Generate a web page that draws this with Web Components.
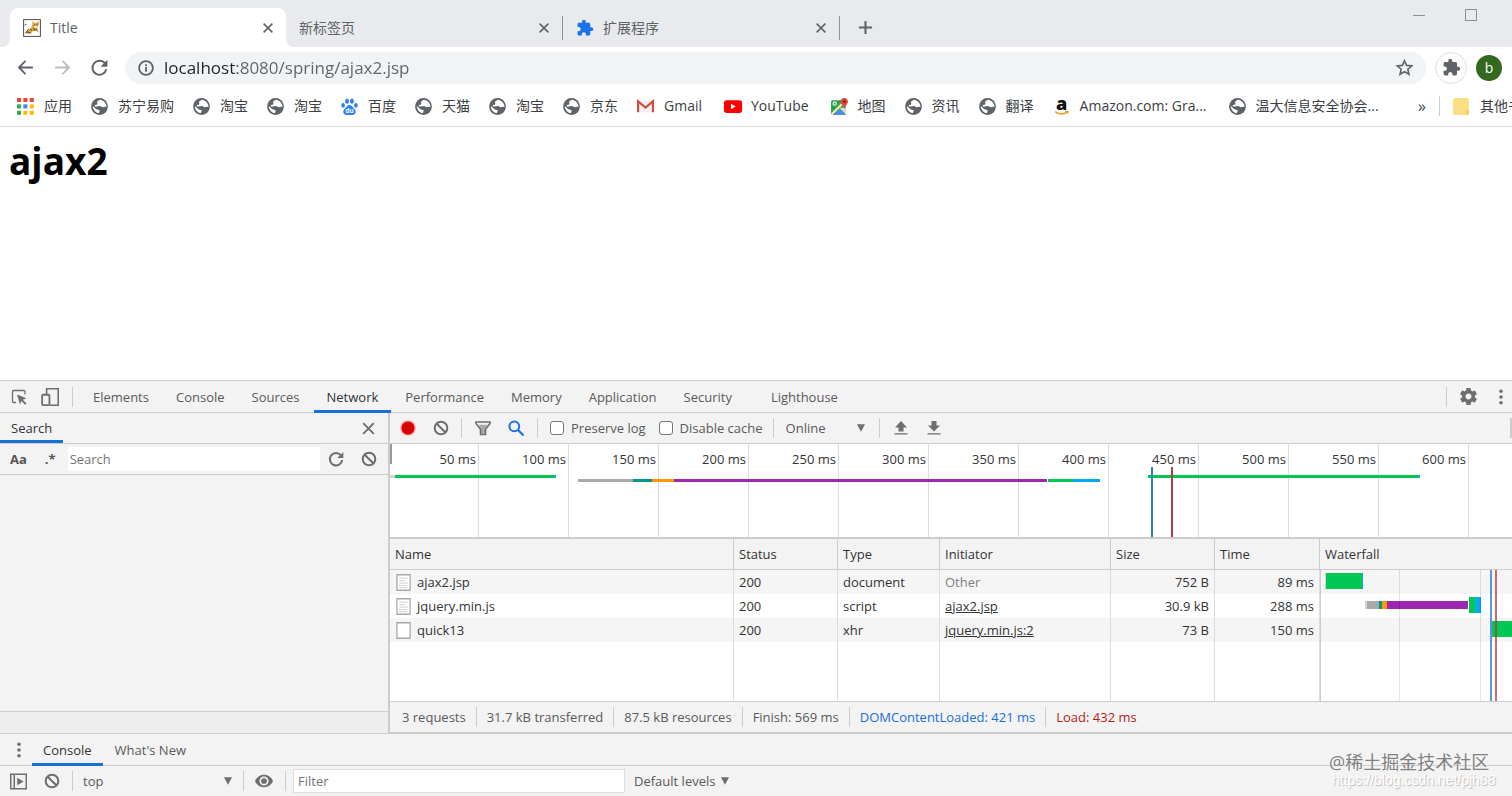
<!DOCTYPE html>
<html lang="zh-CN">
<head>
<meta charset="UTF-8">
<meta name="viewport" content="width=device-width, initial-scale=1.0">
<title>Title</title>
<style>
  * { box-sizing: border-box; }
  html, body { height: 100%; margin: 0; }
  body {
    font-family: "Open Sans", "Noto Sans CJK SC", sans-serif;
    overflow: hidden;
    background: #fff;
  }
</style>
</head>
<body>
<browser-window></browser-window>

<script>
const BASE = `
  * { box-sizing: border-box; }
  button, input, select { font: inherit; color: inherit; border: 0; background: none; padding: 0; margin: 0; outline: 0; }
  button { display: inline-flex; align-items: center; justify-content: center; flex: none; }
  a { color: inherit; }
`;

const ICONS = {
  close: '<path d="M3 3l10 10M13 3L3 13" fill="none" stroke="currentColor" stroke-width="1.8"/>',
  plus: '<path d="M8 1v14M1 8h14" fill="none" stroke="currentColor" stroke-width="2.200"/>',
  back: '<path d="M15 8H2M8 1.7L1.8 8 8 14.3" fill="none" stroke="currentColor" stroke-width="1.7"/>',
  forward: '<path d="M1 8h13M8 1.7L14.2 8 8 14.3" fill="none" stroke="currentColor" stroke-width="1.7"/>',
  reload: '<path d="M13.2 4.2A6.6 6.6 0 1 0 14.4 9.6" fill="none" stroke="currentColor" stroke-width="1.8"/><path d="M15.4 .8v6.4H9z" fill="currentColor"/>',
  info: '<circle cx="8" cy="8" r="6.9" fill="none" stroke="currentColor" stroke-width="1.8"/><path d="M8 7v4.8M8 4.2v1.8" stroke="currentColor" stroke-width="1.8"/>',
  star: '<path d="M8 1.6l1.9 4.4 4.9.4-3.7 3.2 1.1 4.8L8 11.9l-4.2 2.5 1.1-4.8L1.2 6.4 6.1 6z" fill="none" stroke="currentColor" stroke-width="1.5"/>',
  puzzle: '<path transform="scale(.6667)" d="M20.5 11H19V7c0-1.100-.9-2-2-2h-4V3.500C13 2.120 11.880 1 10.500 1S8 2.120 8 3.500V5H4c-1.100 0-1.990.9-1.990 2v3.800H3.500c1.490 0 2.700 1.210 2.700 2.700s-1.210 2.700-2.700 2.700H2V20c0 1.100.9 2 2 2h3.800v-1.500c0-1.490 1.210-2.700 2.700-2.700 1.490 0 2.700 1.210 2.700 2.700V22H17c1.100 0 2-.9 2-2v-4h1.500c1.380 0 2.500-1.120 2.500-2.500S21.880 11 20.500 11z" fill="currentColor"/>',
  minimize: '<path d="M2 8.500h12" stroke="currentColor" stroke-width="1"/>',
  maximize: '<rect x="2.500" y="2.500" width="11" height="11" fill="none" stroke="currentColor"/>',
  cat: `<rect x=".5" y=".5" width="15" height="15" fill="#fff" stroke="#6b5a66"/>
    <path d="M2 13l2-3.500 3-1 1.500-4L8 2l2.400 1.600 2.100-.4L14.500 2l-.6 3.500-1.400 2.300 1.600 4.200-2.800-1.500-2.800.3-3 2.300z" fill="#d9a441"/>
    <path d="M2 12.500l3-3.500M6.500 8.500l1.500 2M9.500 8l1 2.500M11.500 8.500l.8 1.500M10 5.200h.8M12 5.200h.8M1.500 5.500l2-1M3.500 11.500l4 1" stroke="#3a2a1a" stroke-width=".7" fill="none"/>
    <path d="M10 6.500l1.500 1 1.300-1" stroke="#fff" fill="none"/>`,
  apps: [['#ea4335', '#ea4335', '#ea4335'], ['#34a853', '#4285f4', '#fbbc05'], ['#34a853', '#fbbc05', '#fbbc05']]
    .map((row, y) => row.map((c, x) => `<rect x="${x * 6}" y="${y * 6}" width="3.800" height="3.800" fill="${c}"/>`).join('')).join(''),
  globe: `<circle cx="8" cy="8" r="7.900" fill="#5f6368"/>
    <path d="M9 1.800c-.6.800-1.800.7-2.500 1.300-.6.700.3 1.700-.4 2.400-.8.600-1.900.1-2.400.9-.3.800.5 1.200 1.400 1.200l3.700.1c.9.100 1 1.300 1.900 1.500 1.200.2 2.700-.6 3.700.4.500-3.700-1.700-7-5.400-7.800z" fill="#fff" transform="rotate(-8 8 8)"/>
    <path d="M1.700 7.500l3.400 3c.9.600 2.300.2 2.900 1 .5.900-.5 1.700-.4 2.700-3.300-.2-6-3.300-5.900-6.700z" fill="#fff"/>`,
  baidu: `<g fill="#2f80f0"><ellipse cx="5.700" cy="3" rx="1.800" ry="2.600"/><ellipse cx="10.300" cy="3" rx="1.800" ry="2.600"/><ellipse cx="2" cy="7" rx="1.700" ry="2.200"/><ellipse cx="14" cy="7" rx="1.700" ry="2.200"/>
    <path d="M8 6.500c2 0 2.900 2 4.200 3.300 1.500 1.400 2.100 2.600 1.500 4.300-.6 1.700-2.200 1.900-5.700 1.900s-5.100-.2-5.700-1.900c-.6-1.700 0-2.900 1.500-4.300C5.100 8.500 6 6.500 8 6.500z"/></g>
    <text x="8" y="14.300" font-size="6" font-weight="700" text-anchor="middle" fill="#fff">du</text>`,
  gmail: '<path d="M0 2.500h16v11H0z" fill="#f1f1f1"/><path d="M1 13.500V3.200l7 5.900 7-5.900v10.300" fill="none" stroke="#d54b3d" stroke-width="2"/>',
  youtube: '<rect y="2" width="17" height="12" rx="2.500" fill="#f00"/><path d="M6.500 5.300l4.600 2.700-4.600 2.700z" fill="#fff"/>',
  maps: `<rect y="2" width="14" height="14" rx="1.500" fill="#34a853"/><path d="M14 9v6.500L8 9.500z" fill="#ddd"/><path d="M2.500 16L8 10.500l5.500 5.500z" fill="#4c8bf5"/>
    <path d="M.5 15.500L13.500 2.500" stroke="#f7e9b5" stroke-width="2"/><path d="M.6 10.800L9 2.300" stroke="#1f8f46"/><circle cx="3.500" cy="5.300" r="1.500" fill="none" stroke="#fff"/>
    <path d="M12.500 0c2.100 0 3.500 1.600 3.500 3.400 0 2.600-2.700 3.600-3.500 7.100C11.700 7 9 6 9 3.400 9 1.600 10.400 0 12.500 0z" fill="#e24a3b"/><circle cx="12.500" cy="3.500" r="1.300" fill="#8c2219"/>`,
  amazon: `<text x="8" y="11" font-size="17" font-weight="800" text-anchor="middle" fill="#111">a</text>
    <path d="M2 12.800c3.500 2.700 8 2.700 11.300.5M11.500 12.600l2.500.2-.6 2" fill="none" stroke="#f19a1a" stroke-width="1.300"/>`,
  folder: '<path d="M2 0h11a2 2 0 0 1 2 2v12a2 2 0 0 1-2 2H2a2 2 0 0 1-2-2V2a2 2 0 0 1 2-2z" fill="#fbdf83"/><path d="M12 16v-4.500h3V14a2 2 0 0 1-2 2z" fill="#f1cc60"/>',
  inspect: '<path d="M14 5.500V2.600a1.100 1.100 0 0 0-1.100-1.100H2.600a1.100 1.100 0 0 0-1.100 1.100v9.800a1.100 1.100 0 0 0 1.100 1.100H5" fill="none" stroke="currentColor" stroke-width="1.300"/><path d="M6 5.500l9.500 3.800-3.700 1.500 3.700 3.700-1.300 1.300-3.700-3.700L9 15.500z" fill="currentColor"/>',
  device: '<path d="M5 6V.7h10.300v14.600H8" fill="none" stroke="currentColor" stroke-width="1.400"/><rect x="1" y="6" width="6.500" height="9.300" rx=".8" fill="none" stroke="currentColor" stroke-width="1.600"/>',
  gear: '<path transform="translate(-1.600 -1.600) scale(.8)" fill="currentColor" fill-rule="evenodd" d="M19.430 12.980c.04-.32.07-.64.07-.98s-.03-.66-.07-.98l2.110-1.650c.19-.15.24-.42.12-.64l-2-3.460c-.12-.22-.39-.3-.61-.22l-2.490 1c-.52-.4-1.080-.73-1.690-.98l-.38-2.650C14.460 2.180 14.250 2 14 2h-4c-.25 0-.46.180-.49.420l-.38 2.650c-.61.250-1.170.590-1.690.98l-2.490-1c-.23-.09-.49 0-.61.220l-2 3.460c-.13.220-.07.490.12.640l2.110 1.650c-.04.320-.07.650-.07.980s.03.660.07.980l-2.110 1.650c-.19.150-.24.420-.12.640l2 3.460c.12.220.39.300.61.220l2.490-1c.52.400 1.080.730 1.690.980l.38 2.650c.03.240.24.420.49.420h4c.25 0 .46-.18.49-.42l.38-2.650c.61-.25 1.170-.59 1.690-.98l2.490 1c.23.090.49 0 .61-.22l2-3.460c.12-.22.07-.49-.12-.64l-2.110-1.650zM12 15.500c-1.930 0-3.500-1.570-3.500-3.500s1.570-3.500 3.500-3.500 3.500 1.570 3.500 3.500-1.570 3.500-3.500 3.500z"/>',
  dots: '<g fill="currentColor"><circle cx="8" cy="2.200" r="1.800"/><circle cx="8" cy="8" r="1.800"/><circle cx="8" cy="13.800" r="1.800"/></g>',
  record: '<circle cx="8" cy="8" r="8" fill="#f8b9b5"/><circle cx="8" cy="8" r="6.600" fill="#d80000"/>',
  block: '<circle cx="8" cy="8" r="6.300" fill="none" stroke="currentColor" stroke-width="2"/><path d="M3.700 3.700l8.600 8.600" stroke="currentColor" stroke-width="2"/>',
  filter: '<path d="M1 2h14v1.500l-4.500 5.700v5.300h-5V9.200L1 3.500z" fill="none" stroke="currentColor" stroke-width="1.600"/><path d="M3.500 4.800h9L10 8.800v5H6v-5z" fill="currentColor" opacity=".55"/>',
  search: '<circle cx="6.300" cy="6.300" r="4.900" fill="none" stroke="#1a73e8" stroke-width="2"/><path d="M9.800 9.800l5.700 5.700" stroke="#1a73e8" stroke-width="2.200"/>',
  upload: '<path d="M8 1l6 6.500h-3.500v4h-5v-4H2zM1.500 13.200h13v1.400h-13z" fill="currentColor"/>',
  download: '<path d="M8 11.500L2 5.500h3.500V1h5v4.500H14zM1.500 13.200h13v1.400h-13z" fill="currentColor"/>',
  refresh: '<path d="M13 4.500A6.200 6.200 0 1 0 14.200 9" fill="none" stroke="currentColor" stroke-width="2"/><path d="M15.300 1v6H9.300z" fill="currentColor"/>',
  sidebar: '<path d="M.7 1.200h14.600v13.600H.7zM4 1v14" fill="none" stroke="currentColor" stroke-width="1.400"/><path d="M6.800 4.500l6 3.500-6 3.500z" fill="currentColor"/>',
  eye: '<path d="M8 2.500C4.400 2.500 1.300 4.800 0 8c1.300 3.200 4.400 5.500 8 5.500s6.700-2.300 8-5.500c-1.300-3.200-4.400-5.500-8-5.500z" fill="currentColor"/><circle cx="8" cy="8" r="3.300" fill="none" stroke="#f3f3f3" stroke-width="1.500"/>',
  caret: '<path d="M1.500 2h13L8 14z" fill="currentColor"/>',
  doc: '<path d="M1.800.700h12.400v14.600H1.800z" fill="#fff" stroke="#a8a8a8" stroke-width="1.200"/><path d="M4 4h8M4 6.300h6M4 8.600h8M4 10.900h7M4 12.900h8" stroke="#cfcfcf" stroke-width=".9"/>',
  blank: '<path d="M1.800.700h12.400v14.600H1.800z" fill="#fff" stroke="#a8a8a8" stroke-width="1.200"/>',
};

function define(name, render) {
  customElements.define(name, class extends HTMLElement {
    connectedCallback() {
      if (this.shadowRoot) return;
      this.attachShadow({ mode: 'open' });
      this.shadowRoot.innerHTML = `<style>${BASE}</style>` + render(this);
    }
  });
}

// <ui-icon name="..." size="16">
define('ui-icon', (el) => {
  const size = el.getAttribute('size') || 16;
  return `
    <style>
      :host { display: inline-flex; flex: none; width: ${size}px; height: ${size}px; }
      svg { width: 100%; height: 100%; overflow: visible; }
    </style>
    <svg viewBox="0 0 16 16" aria-hidden="true">${ICONS[el.getAttribute('name')]}</svg>`;
});

define('tool-separator', () => `
  <style>
    :host { display: block; flex: none; width: 1px; height: 20px; background: #ccc; }
  </style>`);

// Segments are "colour:width" pairs, drawn left to right; "none" leaves a gap.
define('timing-bar', (el) => {
  const colors = {
    none: 'transparent', edge: '#d5d5d5', wait: '#a9a9a9', dns: '#009688', connect: '#ff9800',
    ssl: '#9c27b0', ttfb: '#00c853', receive: '#03a9f4',
  };
  const parts = el.getAttribute('segments').split(' ').map((s) => {
    const [kind, width] = s.split(':');
    return `<i class="${kind}" style="width:${width}px;background:${colors[kind]}"></i>`;
  });
  return `
    <style>
      :host { display: flex; align-items: center; height: var(--bar-height, 16px); overflow: hidden; }
      i { flex: none; height: 100%; }
      :host([thin]) .edge, :host([thin]) .wait, :host([thin]) .dns,
      :host([thin]) .connect, :host([thin]) .ssl { height: 50%; }
    </style>
    ${parts.join('')}`;
});

define('browser-tab', (el) => `
  <style>
    :host {
      display: flex; align-items: center; flex: 0 1 276px; height: 39px; min-width: 0;
      padding: 0 10px 0 13px; color: #5f6368; font-size: 14px;
    }
    :host([active]) { position: relative; background: #fff; border-radius: 8px 8px 0 0; }
    :host([active])::before, :host([active])::after {
      content: ""; position: absolute; bottom: 0; width: 8px; height: 8px;
    }
    :host([active])::before { right: 100%; background: radial-gradient(circle at 0 0, transparent 8px, #fff 8px); }
    :host([active])::after { left: 100%; background: radial-gradient(circle at 100% 0, transparent 8px, #fff 8px); }
    .label { flex: 1; display: flex; align-items: center; justify-content: flex-start; gap: 9px; min-width: 0; white-space: nowrap; line-height: 20px; }
    .close { width: 16px; height: 16px; color: #5f6368; }
    ui-icon[name=puzzle] { color: #1a73e8; }
  </style>
  <button class="label">${el.getAttribute('icon') ? `<ui-icon name="${el.getAttribute('icon')}" size="18"></ui-icon>` : ''}<slot></slot></button>
  <button class="close" aria-label="Close tab"><ui-icon name="close" size="14"></ui-icon></button>`);

define('tab-strip', () => `
  <style>
    :host { display: flex; align-items: flex-end; height: 47px; padding-left: 10px; background: #e8eaed; color: #5f6368; }
    tool-separator { align-self: center; height: 24px; margin-top: 8px; background: #8f9296; }
    .new { width: 28px; height: 39px; margin-left: 11px; }
    .window { margin-left: auto; align-self: flex-start; display: flex; gap: 36px; padding: 7px 33px 0 0; color: #8d8f92; }
  </style>
  <browser-tab active icon="cat">Title</browser-tab>
  <browser-tab>新标签页</browser-tab>
  <tool-separator></tool-separator>
  <browser-tab icon="puzzle">扩展程序</browser-tab>
  <tool-separator></tool-separator>
  <button class="new" aria-label="New tab"><ui-icon name="plus" size="15"></ui-icon></button>
  <div class="window">
    <button aria-label="Minimize"><ui-icon name="minimize"></ui-icon></button>
    <button aria-label="Maximize"><ui-icon name="maximize"></ui-icon></button>
  </div>`);

define('address-bar', () => `
  <style>
    :host { display: flex; align-items: center; height: 41px; padding: 0 10px 0 17px; color: #5f6368; }
    nav { display: flex; gap: 20px; margin-right: 17px; }
    .forward { color: #babcbe; }
    .omnibox {
      flex: 1; display: flex; align-items: center; height: 32px; padding: 0 13px;
      border-radius: 16px; background: #f1f3f4; gap: 10px;
    }
    input {
      flex: 1; min-width: 0; font-size: 17px; line-height: 24px;
      background: linear-gradient(to right, #202124 73px, #5f6368 73px);
      -webkit-background-clip: text; background-clip: text; -webkit-text-fill-color: transparent;
    }
    .ext { width: 32px; height: 32px; margin-left: 9px; border: 1px solid #dcdfe3; border-radius: 50%; }
    .avatar { width: 26px; height: 26px; margin-left: 9px; border-radius: 50%; background: #33691e; color: #fff; font-size: 14px; line-height: 20px; }
  </style>
  <nav>
    <button aria-label="Back"><ui-icon name="back" size="17"></ui-icon></button>
    <button class="forward" aria-label="Forward"><ui-icon name="forward" size="17"></ui-icon></button>
    <button aria-label="Reload"><ui-icon name="reload" size="17"></ui-icon></button>
  </nav>
  <div class="omnibox">
    <ui-icon name="info"></ui-icon>
    <input type="text" aria-label="Address" value="localhost:8080/spring/ajax2.jsp">
    <button aria-label="Bookmark this page"><ui-icon name="star" size="17"></ui-icon></button>
  </div>
  <button class="ext" aria-label="Extensions"><ui-icon name="puzzle" size="19"></ui-icon></button>
  <button class="avatar">b</button>`);

define('bookmark-link', (el) => `
  <style>
    :host { display: block; flex: none; }
    :host(:lang(en)) { padding-right: 3px; }
    a { display: flex; align-items: center; gap: 10px; color: #3c4043; font-size: 14px; line-height: 20px; white-space: nowrap; text-decoration: none; }
  </style>
  <a href="#"><ui-icon name="${el.getAttribute('icon') || 'globe'}" size="17"></ui-icon><slot></slot></a>`);

define('bookmark-bar', () => `
  <style>
    :host {
      display: flex; align-items: center; gap: 19px; height: 39px; padding: 0 0 2px 17px;
      border-bottom: 1px solid #dadce0; overflow: hidden; color: #3c4043;
    }
    .more { margin-left: auto; font-size: 16px; line-height: 20px; }
    .other { display: flex; align-items: center; flex: none; gap: 13px; width: 73px; margin-left: -6px; }
  </style>
  <bookmark-link icon="apps">应用</bookmark-link>
  <bookmark-link>苏宁易购</bookmark-link>
  <bookmark-link>淘宝</bookmark-link>
  <bookmark-link>淘宝</bookmark-link>
  <bookmark-link icon="baidu">百度</bookmark-link>
  <bookmark-link>天猫</bookmark-link>
  <bookmark-link>淘宝</bookmark-link>
  <bookmark-link>京东</bookmark-link>
  <bookmark-link lang="en" icon="gmail">Gmail</bookmark-link>
  <bookmark-link lang="en" icon="youtube">YouTube</bookmark-link>
  <bookmark-link icon="maps">地图</bookmark-link>
  <bookmark-link>资讯</bookmark-link>
  <bookmark-link>翻译</bookmark-link>
  <bookmark-link lang="en" icon="amazon">Amazon.com: Gra...</bookmark-link>
  <bookmark-link>温大信息安全协会...</bookmark-link>
  <button class="more" aria-label="More bookmarks">»</button>
  <div class="other">
    <tool-separator></tool-separator>
    <bookmark-link icon="folder">其他书签</bookmark-link>
  </div>`);

define('page-view', () => `
  <style>
    :host { display: block; flex: 1; min-height: 0; padding: 9px; overflow: hidden; }
    h1 { margin: 0; font-size: 37px; line-height: 50px; font-weight: 700; color: #000; }
  </style>
  <h1><slot></slot></h1>`);

define('panel-tab', () => `
  <style>
    :host { display: flex; flex: none; }
    button { height: 100%; padding: 2px var(--tab-pad, 11px) 0; border-bottom: 3px solid transparent; white-space: nowrap; line-height: 20px; color: #5a5a5a; }
    :host([active]) button { border-color: #1a6fd6; color: #333; }
  </style>
  <button><slot></slot></button>`);

define('devtools-tabs', () => `
  <style>
    :host { display: flex; align-items: center; height: 33px; padding: 0 3px 0 11px; border-top: 1px solid #ccc; border-bottom: 1px solid #ccc; color: #6e6e6e; }
    .tabs { display: flex; align-self: stretch; margin: 0 auto -1px 7px; gap: 1px; --tab-pad: 13px; }
    .last { margin-left: 12px; }
    tool-separator { margin-left: 13px; }
    button + button { margin-left: 14px; }
    .gear { margin-left: 13px; }
    .gear + button { margin-left: 16px; }
  </style>
  <button aria-label="Inspect element"><ui-icon name="inspect"></ui-icon></button>
  <button aria-label="Toggle device toolbar"><ui-icon name="device" size="18"></ui-icon></button>
  <tool-separator></tool-separator>
  <div class="tabs">
    <panel-tab>Elements</panel-tab>
    <panel-tab>Console</panel-tab>
    <panel-tab>Sources</panel-tab>
    <panel-tab active>Network</panel-tab>
    <panel-tab>Performance</panel-tab>
    <panel-tab>Memory</panel-tab>
    <panel-tab>Application</panel-tab>
    <panel-tab>Security</panel-tab>
    <panel-tab class="last">Lighthouse</panel-tab>
  </div>
  <tool-separator></tool-separator>
  <button class="gear" aria-label="Settings"><ui-icon name="gear" size="17"></ui-icon></button>
  <button aria-label="More options"><ui-icon name="dots"></ui-icon></button>`);

define('search-pane', () => `
  <style>
    :host { display: flex; flex-direction: column; background: #f3f3f3; color: #6e6e6e; }
    header, .bar { display: flex; align-items: center; border-bottom: 1px solid #ccc; }
    header { height: 31px; justify-content: space-between; padding-right: 11px; }
    header panel-tab { align-self: stretch; }
    .bar { height: 31px; padding: 0 11px 0 10px; }
    .bar b { color: #555; line-height: 20px; }
    .regex { margin: 0 12px 0 18px; }
    input { flex: 1; min-width: 0; height: 24px; padding: 0 2px; background: #fff; color: #555; margin-right: 8px; }
    input::placeholder { color: #757575; }
    .clear { margin-left: 17px; }
    .results { flex: 1; }
    footer { height: 22px; border-top: 1px solid #ccc; background: #eee; }
  </style>
  <header>
    <panel-tab active>Search</panel-tab>
    <button aria-label="Close search"><ui-icon name="close" size="17"></ui-icon></button>
  </header>
  <div class="bar">
    <button aria-label="Match case"><b>Aa</b></button>
    <button class="regex" aria-label="Use regular expression"><b>.*</b></button>
    <input type="text" placeholder="Search" aria-label="Search">
    <button aria-label="Refresh"><ui-icon name="refresh"></ui-icon></button>
    <button class="clear" aria-label="Clear"><ui-icon name="block"></ui-icon></button>
  </div>
  <div class="results"></div>
  <footer></footer>`);

define('dev-select', (el) => `
  <style>
    :host { display: inline-grid; align-items: center; flex: none; }
    select, ui-icon { grid-area: 1 / 1; }
    select { appearance: none; width: 100%; line-height: 20px; color: #5a5a5a; }
    ui-icon { justify-self: end; pointer-events: none; }
  </style>
  <select aria-label="${el.getAttribute('label')}"><option>${el.getAttribute('value')}</option></select>
  <ui-icon name="caret" size="10"></ui-icon>`);

define('check-option', () => `
  <style>
    :host { display: inline-flex; flex: none; }
    label { display: flex; align-items: center; gap: 7px; line-height: 20px; color: #5a5a5a; white-space: nowrap; }
    input { appearance: none; width: 14px; height: 14px; border: 1px solid #767676; border-radius: 3px; background: #fff; }
  </style>
  <label><input type="checkbox"><slot></slot></label>`);

define('network-toolbar', () => `
  <style>
    :host { display: flex; align-items: center; height: 31px; padding-left: 10px; border-bottom: 1px solid #ccc; color: #6e6e6e; overflow: hidden; }
    button { width: 16px; margin-right: 17px; }
    .clear { margin-right: 12px; }
    tool-separator + button { margin-left: 13px; }
    check-option { margin-right: 13px; }
    .find { margin-right: 13px; }
    .options { margin-right: 12px; }
    .gap { margin-right: 10px; }
    dev-select { width: 80px; margin: 0 13px 0 12px; }
    .end { margin-left: auto; width: 2px; }
  </style>
  <button aria-label="Record"><ui-icon name="record"></ui-icon></button>
  <button class="clear" aria-label="Clear"><ui-icon name="block"></ui-icon></button>
  <tool-separator></tool-separator>
  <button aria-label="Filter"><ui-icon name="filter"></ui-icon></button>
  <button class="find" aria-label="Search"><ui-icon name="search"></ui-icon></button>
  <tool-separator class="options"></tool-separator>
  <check-option>Preserve log</check-option>
  <check-option class="gap">Disable cache</check-option>
  <tool-separator></tool-separator>
  <dev-select label="Throttling" value="Online"></dev-select>
  <tool-separator></tool-separator>
  <button aria-label="Import HAR"><ui-icon name="upload"></ui-icon></button>
  <button aria-label="Export HAR"><ui-icon name="download"></ui-icon></button>
  <tool-separator class="end"></tool-separator>`);

define('network-overview', () => {
  const cells = [];
  for (let t = 50; t <= 650; t += 50) cells.push(`<span>${t} ms</span>`);
  return `
  <style>
    :host { display: block; position: relative; height: 95px; background: #fff; overflow: hidden; border-bottom: 2px solid #ccc; color: #333; }
    .scale { display: flex; height: 100%; }
    .scale span { flex: none; width: 90px; padding: 5px 2px 0 0; border-right: 1px solid #ddd; text-align: right; line-height: 20px; }
    .scale span:first-child { width: 89px; }
    .tracks { position: absolute; inset: 31px 0 auto 0; display: grid; gap: 1px; --bar-height: 3px; }
    .mark { position: absolute; top: 23px; bottom: 0; width: 2px; }
    .dcl { left: 761px; background: #2f7fc4; }
    .load { left: 781px; background: #b04040; }
    .handle { position: absolute; top: 0; left: 0; width: 2px; height: 20px; background: #999; }
  </style>
  <div class="scale">${cells.join('')}</div>
  <div class="tracks">
    <timing-bar segments="edge:5 ttfb:160 receive:1 none:592 ttfb:271 receive:1"></timing-bar>
    <timing-bar segments="none:188 wait:55 dns:19 connect:22 ssl:373 none:1 ttfb:25 receive:27"></timing-bar>
  </div>
  <div class="mark dcl"></div>
  <div class="mark load"></div>
  <div class="handle"></div>`;
});

define('request-table', () => {
  const rows = [
    { icon: 'doc', name: 'ajax2.jsp', status: 200, type: 'document', from: 'Other', size: '752 B', time: '89 ms', bar: 'none:4 edge:1 ttfb:36 receive:1' },
    { icon: 'doc', name: 'jquery.min.js', status: 200, type: 'script', from: 'ajax2.jsp', link: true, size: '30.9 kB', time: '288 ms', bar: 'none:44 edge:2 wait:12 dns:3 connect:5 ssl:81 none:1 ttfb:6 receive:6', thin: true },
    { icon: 'blank', name: 'quick13', status: 200, type: 'xhr', from: 'jquery.min.js:2', link: true, size: '73 B', time: '150 ms', bar: 'none:171 ttfb:60' },
  ];
  return `
  <style>
    :host { display: block; position: relative; flex: 1; min-height: 0; background: #fff; overflow: hidden; color: #333; }
    table { width: 100%; height: 100%; table-layout: fixed; border-collapse: separate; border-spacing: 0; }
    th, td { padding: 0 5px; border-right: 1px solid #ddd; text-align: left; font-weight: 400; white-space: nowrap; overflow: hidden; line-height: 20px; }
    th { height: 31px; background: #f3f3f3; border-right-color: #ccc; border-bottom: 1px solid #ccc; }
    td { height: 24px; }
    th:last-child, td:last-child { border-right: 0; padding-right: 0; }
    td:last-child { border-left: 1px solid #ccc; padding-left: 0; }
    tr:nth-child(odd):not(.fill) td { background: #f5f5f5; }
    .num { text-align: right; }
    .other { color: #808080; }
    .fill td { height: auto; }
    .name { display: flex; align-items: center; gap: 5px; }
    timing-bar { margin-bottom: 3px; }
    .lines { position: absolute; inset: 31px 0 0 auto; width: 192px; pointer-events: none; }
    .lines i { position: absolute; top: 0; bottom: 0; width: 1px; background: rgba(0, 0, 0, .1); }
    .lines .dcl { width: 2px; background: rgba(25, 110, 210, .7); }
    .lines .load { width: 2px; background: rgba(185, 50, 50, .7); }
  </style>
  <table>
    <colgroup><col><col style="width:104px"><col style="width:102px"><col style="width:171px"><col style="width:104px"><col style="width:105px"><col style="width:192px"></colgroup>
    <thead><tr><th>Name</th><th>Status</th><th>Type</th><th>Initiator</th><th>Size</th><th>Time</th><th>Waterfall</th></tr></thead>
    <tbody>
      ${rows.map((r) => `<tr>
        <td><span class="name"><ui-icon name="${r.icon}" size="17"></ui-icon>${r.name}</span></td>
        <td>${r.status}</td><td>${r.type}</td>
        <td>${r.link ? `<a href="#">${r.from}</a>` : `<span class="other">${r.from}</span>`}</td>
        <td class="num">${r.size}</td><td class="num">${r.time}</td>
        <td><timing-bar ${r.thin ? 'thin' : ''} segments="${r.bar}"></timing-bar></td>
      </tr>`).join('')}
      <tr class="fill"><td></td><td></td><td></td><td></td><td></td><td></td><td></td></tr>
    </tbody>
  </table>
  <div class="lines">
    <i style="left:79px"></i><i style="left:160px"></i>
    <i class="dcl" style="left:170px"></i><i class="load" style="left:175px"></i>
  </div>`;
});

define('network-summary', () => `
  <style>
    :host { display: flex; align-items: center; gap: 10px; height: 32px; padding-left: 12px; border-top: 1px solid #ccc; border-bottom: 1px solid #ccc; color: #5a5a5a; line-height: 20px; white-space: nowrap; }
    .dcl { color: #1a6fd6; }
    .load { color: #b71c1c; }
  </style>
  <span>3 requests</span><tool-separator></tool-separator>
  <span>31.7 kB transferred</span><tool-separator></tool-separator>
  <span>87.5 kB resources</span><tool-separator></tool-separator>
  <span>Finish: 569 ms</span><tool-separator></tool-separator>
  <span class="dcl">DOMContentLoaded: 421 ms</span><tool-separator></tool-separator>
  <span class="load">Load: 432 ms</span>`);

define('network-panel', () => `
  <style>
    :host { display: flex; flex-direction: column; min-width: 0; border-left: 2px solid #ccc; }
  </style>
  <network-toolbar></network-toolbar>
  <network-overview></network-overview>
  <request-table></request-table>
  <network-summary></network-summary>`);

define('console-drawer', () => `
  <style>
    :host { display: block; border-top: 1px solid #ccc; color: #6e6e6e; }
    .tabs { display: flex; align-items: center; height: 32px; padding-left: 11px; border-bottom: 1px solid #ccc; }
    .tabs panel-tab { align-self: stretch; margin: 0 1px -1px 0; }
    .tabs button { margin-right: 5px; }
    .bar { display: flex; align-items: center; height: 30px; padding-left: 10px; }
    .bar > button { margin-right: 17px; }
    .bar .clear, .bar .eye { margin-right: 12px; }
    .context { width: 150px; margin: 0 10px; }
    .bar .eye { margin-left: 11px; }
    input { width: 332px; height: 24px; margin: 0 9px 0 7px; padding: 0 4px; background: #fff; border: 1px solid #ddd; color: #555; }
    input::placeholder { color: #757575; }
    .levels { width: 96px; }
  </style>
  <div class="tabs">
    <button aria-label="More tools"><ui-icon name="dots"></ui-icon></button>
    <panel-tab active>Console</panel-tab>
    <panel-tab>What's New</panel-tab>
  </div>
  <div class="bar">
    <button aria-label="Show console sidebar"><ui-icon name="sidebar" size="17"></ui-icon></button>
    <button class="clear" aria-label="Clear console"><ui-icon name="block"></ui-icon></button>
    <tool-separator></tool-separator>
    <dev-select class="context" label="Context" value="top"></dev-select>
    <tool-separator></tool-separator>
    <button class="eye" aria-label="Create live expression"><ui-icon name="eye" size="18"></ui-icon></button>
    <tool-separator></tool-separator>
    <input type="text" placeholder="Filter" aria-label="Filter">
    <dev-select class="levels" label="Log levels" value="Default levels"></dev-select>
  </div>`);

define('dev-tools', () => `
  <style>
    :host { display: flex; flex-direction: column; flex: none; height: 416px; background: #f3f3f3; font-size: 13px; }
    .panes { flex: 1; min-height: 0; display: grid; grid-template-columns: 388px minmax(0, 1fr); }
  </style>
  <devtools-tabs></devtools-tabs>
  <div class="panes">
    <search-pane></search-pane>
    <network-panel></network-panel>
  </div>
  <console-drawer></console-drawer>`);

define('page-watermark', () => `
  <style>
    :host { position: absolute; right: 8px; bottom: 8px; width: 175px; pointer-events: none; white-space: nowrap; }
    div { font-size: 18px; line-height: 20px; color: #808080; text-shadow: 0 0 2px #fff; }
    small { display: block; font: 14px/16px "Liberation Sans", sans-serif; padding-left: 3px; color: #fff; text-shadow: 1px 1px 1px #bbb; }
  </style>
  <div>@稀土掘金技术社区</div>
  <small>https://blog.csdn.net/pjh88</small>`);

define('browser-window', () => `
  <style>
    :host { display: flex; flex-direction: column; position: relative; height: 100vh; overflow: hidden; }
  </style>
  <tab-strip></tab-strip>
  <address-bar></address-bar>
  <bookmark-bar></bookmark-bar>
  <page-view>ajax2</page-view>
  <dev-tools></dev-tools>
  <page-watermark></page-watermark>`);
</script>
</body>
</html>
